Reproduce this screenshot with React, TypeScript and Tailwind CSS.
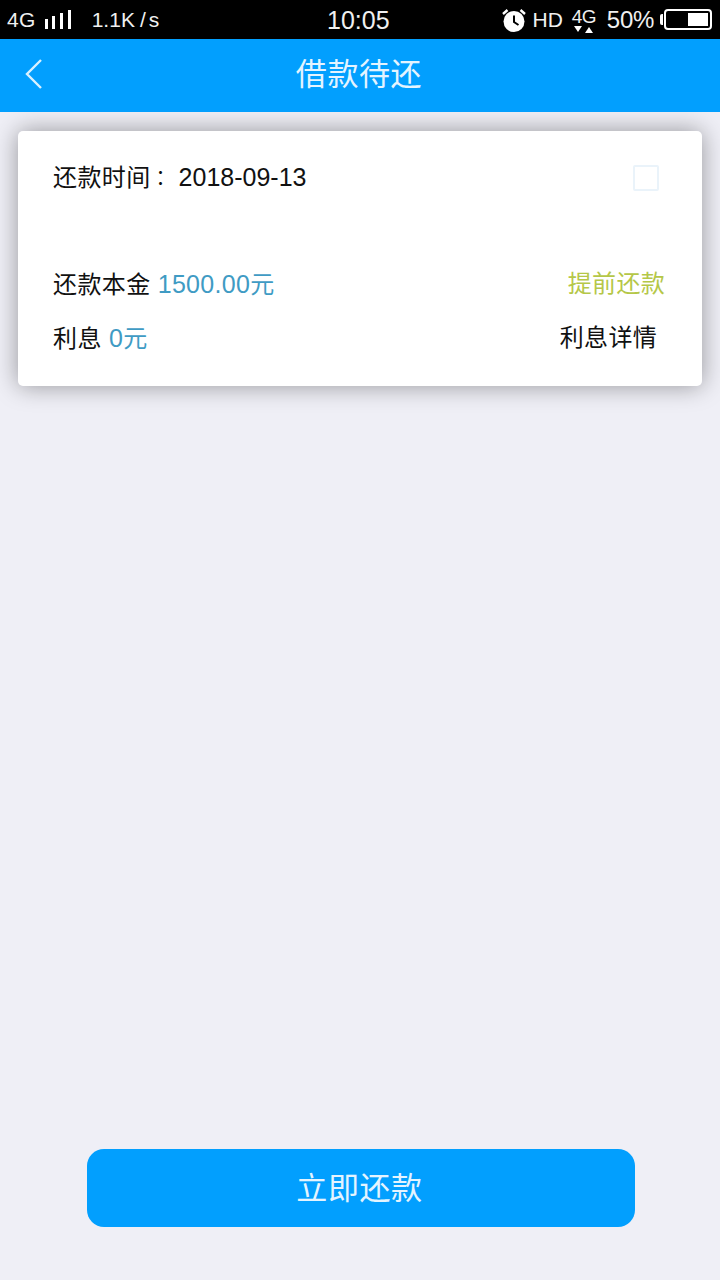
import React from "react";

function Alarm() {
  return (
    <svg width="26" height="26" viewBox="0 0 26 26" className="shrink-0">
      <circle cx="13" cy="14.5" r="10.5" fill="#fff" />
      <path d="M13 8.5V15l4.5 3" stroke="#000" strokeWidth="2" fill="none" />
      <path d="M2 7 6.5 3M24 7 19.5 3" stroke="#fff" strokeWidth="2.4" fill="none" />
    </svg>
  );
}

export default function App() {
  return (
    <div className="w-[720px] h-[1280px] flex flex-col bg-[#efeff6] font-['Liberation_Sans','Noto_Sans_CJK_SC',sans-serif] overflow-hidden">
      {/* Status bar */}
      <div className="h-[39px] bg-black text-[#f0f0f0] flex items-center relative shrink-0">
        <div className="flex items-center w-[300px] pl-[7px]">
          <span className="text-[21px] leading-none tracking-[0.3px]">4G</span>
          <div className="flex items-end gap-[4.7px] ml-[9px] h-[19px]">
            <div className="w-[3px] h-[10px] bg-white" />
            <div className="w-[3px] h-[13px] bg-white" />
            <div className="w-[3px] h-[16px] bg-white" />
            <div className="w-[3px] h-[19px] bg-white" />
          </div>
          <span className="text-[21px] leading-none ml-[21px]">1.1K<span className="ml-[5px]">/</span><span className="ml-[3px]">s</span></span>
        </div>
        <span className="absolute left-[327px] top-[5px] text-[25px] leading-[30px]">10:05</span>
        <div className="ml-auto flex items-center pr-[8px]">
          <Alarm />
          <span className="text-[21px] leading-none ml-[6px]">HD</span>
          <div className="ml-[8px] flex flex-col items-center w-[26px]">
            <span className="text-[19px] leading-[19px] tracking-[-0.5px]">4G</span>
            <div className="flex gap-[3px] mt-[-1px]">
              <div className="w-0 h-0 border-x-[4px] border-x-transparent border-t-[6px] border-t-white mt-[1px]" />
              <div className="w-0 h-0 border-x-[4px] border-x-transparent border-b-[6px] border-b-white mt-[2px]" />
            </div>
          </div>
          <span className="text-[24px] leading-none ml-[10px] tracking-[-0.3px]">50%</span>
          <div className="ml-[6px] w-[3px] h-[11px] bg-white rounded-l-[2px]" />
          <div className="ml-[1px] w-[48px] h-[21px] border-2 border-white rounded-[4px] flex justify-end p-[2px]">
            <div className="w-[20px] bg-white" />
          </div>
        </div>
      </div>

      {/* Header */}
      <div className="h-[73px] bg-[#029ffe] flex items-center justify-center relative shrink-0">
        <svg width="20" height="32" viewBox="0 0 20 32" className="absolute left-[24px] top-[19px]">
          <path d="M17 2 3 16l14 14" stroke="#d9f1ff" strokeWidth="2.4" fill="none" />
        </svg>
        <span className="text-[31px] text-[#e4f4ff] leading-none tracking-[0.6px] mt-[-3px] ml-[-2px]">借款待还</span>
      </div>

      {/* Card */}
      <div className="mx-[18px] mt-[19px] h-[255px] bg-white rounded-[5px] shadow-[0_0_24px_rgba(0,0,0,0.38)] pl-[35px] pr-[37px] pt-[32px] flex flex-col text-[24px] text-[#111] shrink-0">
        <div className="h-[30px] flex items-center justify-between">
          <span className="leading-[30px] tracking-[0.4px] mt-[-1px]">还款时间<span className="font-['Noto_Sans_CJK_TC'] text-[20px] tracking-[0px]">：</span><span className="text-[25px] tracking-[0px] ml-[8px]">2018-09-13</span></span>
          <div className="w-[26px] h-[26px] border-2 border-[#eaf3fa] rounded-[2px] mr-[6px]" />
        </div>
        <div className="h-[30px] mt-[76px] flex items-center justify-between">
          <span className="leading-[30px] tracking-[0.4px]">还款本金 <span className="text-[#3f9bc4]"><span className="text-[25px] tracking-[0.3px]">1500.00</span>元</span></span>
          <span className="text-[#b5c748] tracking-[0.3px]">提前还款</span>
        </div>
        <div className="h-[30px] mt-[24px] flex items-center justify-between">
          <span className="leading-[30px] tracking-[0.4px]">利息 <span className="text-[#3f9bc4]"><span className="text-[25px]">0</span>元</span></span>
          <span className="mr-[8px] tracking-[0.3px]">利息详情</span>
        </div>
      </div>

      {/* Button */}
      <div className="mt-auto mb-[53px] mx-[87px] h-[78px] bg-[#029ffe] rounded-[17px] w-[548px] flex items-center justify-center shrink-0">
        <span className="text-[31px] text-[#e4f4ff] tracking-[0.6px] leading-none ml-[-3px]">立即还款</span>
      </div>
    </div>
  );
}
